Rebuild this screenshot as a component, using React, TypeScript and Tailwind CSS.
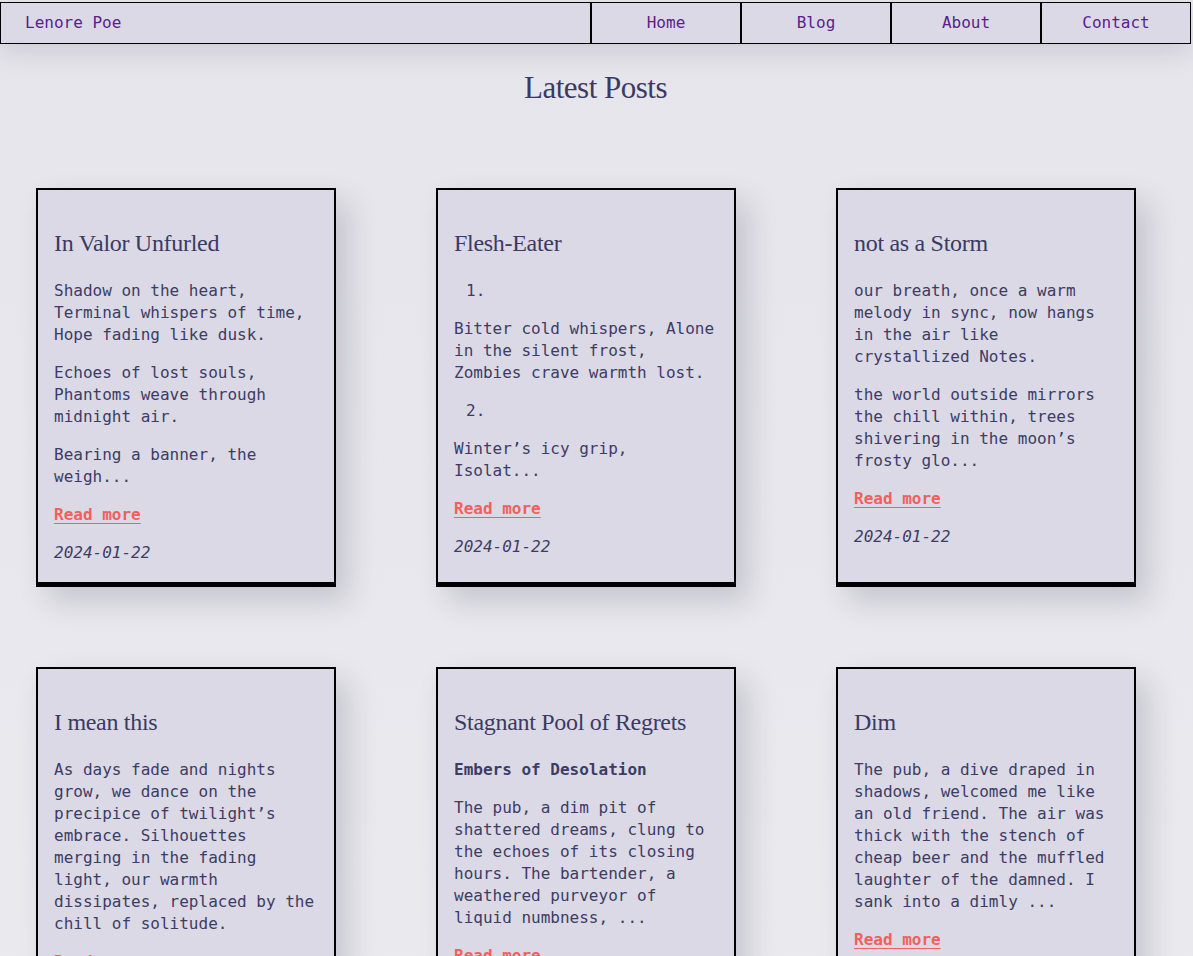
const mono = "font-['DejaVu_Sans_Mono','Liberation_Mono',monospace]";
const serif = "font-['Liberation_Serif','DejaVu_Serif',serif]";

type Block = { kind: "p" | "num" | "bold"; text: string };

const posts: { title: string; blocks: Block[]; date?: string }[] = [
  {
    title: "In Valor Unfurled",
    blocks: [
      { kind: "p", text: "Shadow on the heart, Terminal whispers of time, Hope fading like dusk." },
      { kind: "p", text: "Echoes of lost souls, Phantoms weave through midnight air." },
      { kind: "p", text: "Bearing a banner, the weigh..." },
    ],
    date: "2024-01-22",
  },
  {
    title: "Flesh-Eater",
    blocks: [
      { kind: "num", text: "1." },
      { kind: "p", text: "Bitter cold whispers, Alone in the silent frost, Zombies crave warmth lost." },
      { kind: "num", text: "2." },
      { kind: "p", text: "Winter\u2019s icy grip, Isolat..." },
    ],
    date: "2024-01-22",
  },
  {
    title: "not as a Storm",
    blocks: [
      { kind: "p", text: "our breath, once a warm melody in sync, now hangs in the air like crystallized Notes." },
      { kind: "p", text: "the world outside mirrors the chill within, trees shivering in the moon\u2019s frosty glo..." },
    ],
    date: "2024-01-22",
  },
  {
    title: "I mean this",
    blocks: [
      {
        kind: "p",
        text: "As days fade and nights grow, we dance on the precipice of twilight\u2019s embrace. Silhouettes merging in the fading light, our warmth dissipates, replaced by the chill of solitude.",
      },
    ],
    date: "2024-01-22",
  },
  {
    title: "Stagnant Pool of Regrets",
    blocks: [
      { kind: "bold", text: "Embers of Desolation" },
      {
        kind: "p",
        text: "The pub, a dim pit of shattered dreams, clung to the echoes of its closing hours. The bartender, a weathered purveyor of liquid numbness, ...",
      },
    ],
    date: "2024-01-22",
  },
  {
    title: "Dim",
    blocks: [
      {
        kind: "p",
        text: "The pub, a dive draped in shadows, welcomed me like an old friend. The air was thick with the stench of cheap beer and the muffled laughter of the damned. I sank into a dimly ...",
      },
    ],
    date: "2024-01-22",
  },
];

function Card(props: { post: (typeof posts)[number] }) {
  const { post } = props;
  return (
    <div className="border-2 border-b-[5px] border-black bg-[#dad9e5] px-[16px] pt-[37px] pb-[18px] shadow-[12px_14px_28px_rgba(40,40,60,0.18)]">
      <h2 className={`${serif} text-[24px] leading-[32px] text-[#3b3a63] tracking-[-0.3px]`}>
        {post.title}
      </h2>
      <div className="mt-[21px] text-[16px] leading-[22px] text-[#3d3c64]">
        {post.blocks.map((b, i) => {
          if (b.kind === "num") {
            return (
              <div key={i} className="mb-[16px] pl-[12px]">
                {b.text}
              </div>
            );
          }
          if (b.kind === "bold") {
            return (
              <p key={i} className="mb-[16px] font-bold">
                {b.text}
              </p>
            );
          }
          return (
            <p key={i} className="mb-[16px]">
              {b.text}
            </p>
          );
        })}
        <a href="#" className="block w-fit font-bold text-[#f25f5c] underline underline-offset-[3px]">
          Read more
        </a>
        <p className="mt-[16px] italic">{post.date}</p>
      </div>
    </div>
  );
}

export default function App() {
  const links = ["Home", "Blog", "About", "Contact"];
  return (
    <div className={`${mono} min-h-[956px] w-[1193px] bg-gradient-to-b from-[#e6e5ec] to-[#eaeaef] overflow-hidden`}>
      <nav className="relative z-10 mt-[2px] flex h-[42px] w-[1191px] border border-black bg-[#dad9e5] text-[16px] text-[#5b1d8c] shadow-[0_10px_24px_rgba(40,40,60,0.12)]">
        <div className="flex flex-1 items-center pl-[24px]">Lenore Poe</div>
        {links.map((l) => (
          <a
            key={l}
            href="#"
            className="flex w-[150px] items-center justify-center border-l-2 border-black"
          >
            {l}
          </a>
        ))}
      </nav>
      <h1 className={`${serif} mt-[26px] w-[1191px] text-center text-[31px] leading-[36px] text-[#3b3a63] tracking-[-0.5px]`}>
        Latest Posts
      </h1>
      <div className="mt-[82px] grid grid-cols-[300px_300px_300px] gap-x-[100px] gap-y-[80px] pl-[36px]">
        {posts.map((p) => (
          <Card key={p.title} post={p} />
        ))}
      </div>
    </div>
  );
}
